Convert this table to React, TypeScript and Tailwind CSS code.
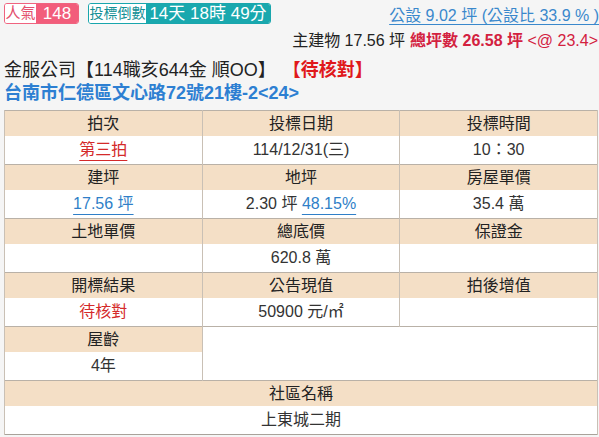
import React from 'react'

const font = { fontFamily: '"Liberation Sans", "Noto Sans CJK TC", sans-serif' }

const th = 'h-[25px] bg-[#f4dfc6] text-center text-[16px] text-[#222] font-normal border-x border-[#c9c0b5] p-0 leading-[25px]'
const td = 'h-[28px] bg-white text-center text-[16px] text-[#333] border-x border-[#c9c0b5] p-0 leading-[28px]'
const groupRow = 'border-t border-[#b9b1a7]'

const Link = ({ children, color = 'text-[#2f7fc8]' }: { children: React.ReactNode; color?: string }) => (
  <span className={`${color} underline underline-offset-[5px] decoration-1`}>{children}</span>
)

export default function App() {
  return (
    <div className="min-h-screen w-[599px] bg-[#f5f5f5] text-[#222]" style={font}>
      {/* top info */}
      <div className="flex items-start justify-between pl-1 pt-[3px]">
        <div className="flex items-center gap-[9px]">
          <div className="flex h-[21px] overflow-hidden rounded-[3px] border border-[#f0637f]">
            <span className="flex w-[31px] items-center justify-center bg-white text-[15px] text-[#e3506e]">人氣</span>
            <span className="flex w-[42px] items-center justify-center bg-[#f25d7b] text-[17px] text-white">148</span>
          </div>
          <div className="flex h-[21px] overflow-hidden rounded-[3px] border border-[#19a6ad]">
            <span className="flex w-[57px] items-center justify-center bg-white text-[14px] text-[#138f95]">投標倒數</span>
            <span className="flex w-[124px] items-center justify-center bg-[#19a8ae] text-[17px] text-white">14天 18時 49分</span>
          </div>
        </div>
        <span className="mt-[3px] text-[16px] leading-[20px] text-[#3a88cc] underline underline-offset-[3px] decoration-1">
          公設 9.02 坪 (公設比 33.9 % )
        </span>
      </div>
      <div className="mt-[5px] flex justify-end pr-[1px] text-[16px] leading-[20px]">
        <span>主建物 17.56 坪</span>
        <span className="ml-[5px] text-[#d3213f]">
          <b>總坪數 26.58 坪</b> &lt;@ 23.4&gt;
        </span>
      </div>
      <div className="mt-[8px] pl-1 text-[18px] leading-[23px]">
        金服公司【114職亥644金 順OO】
        <span className="ml-[16px] font-bold text-[#e0181b]">【待核對】</span>
      </div>
      <div className="pl-1 text-[18px] font-bold leading-[23px] text-[#2d7fd2]">
        台南市仁德區文心路72號21樓-2&lt;24&gt;
      </div>

      {/* auction table */}
      <table className="mt-[5px] ml-1 w-[594px] table-fixed border-collapse border border-[#a9a29a]">
        <tbody>
          <tr className={groupRow}>
            <th className={th}>拍次</th>
            <th className={th}>投標日期</th>
            <th className={th}>投標時間</th>
          </tr>
          <tr>
            <td className={td}><Link color="text-[#d42a2a]">第三拍</Link></td>
            <td className={td}>114/12/31(三)</td>
            <td className={td}>10：30</td>
          </tr>
          <tr className={groupRow}>
            <th className={th}>建坪</th>
            <th className={th}>地坪</th>
            <th className={th}>房屋單價</th>
          </tr>
          <tr>
            <td className={td}><Link>17.56 坪</Link></td>
            <td className={td}>2.30 坪 <Link>48.15%</Link></td>
            <td className={td}>35.4 萬</td>
          </tr>
          <tr className={groupRow}>
            <th className={th}>土地單價</th>
            <th className={th}>總底價</th>
            <th className={th}>保證金</th>
          </tr>
          <tr>
            <td className={td}></td>
            <td className={td}>620.8 萬</td>
            <td className={td}></td>
          </tr>
          <tr className={groupRow}>
            <th className={th}>開標結果</th>
            <th className={th}>公告現值</th>
            <th className={th}>拍後增值</th>
          </tr>
          <tr>
            <td className={td}><span className="text-[#d42a2a]">待核對</span></td>
            <td className={td}>50900 元/㎡</td>
            <td className={td}></td>
          </tr>
          <tr className={groupRow}>
            <th className={th}>屋齡</th>
            <td colSpan={2} rowSpan={2} className="bg-white border-x border-[#c9c0b5]"></td>
          </tr>
          <tr>
            <td className={td}>4年</td>
          </tr>
          <tr className={groupRow}>
            <th colSpan={3} className={th}>社區名稱</th>
          </tr>
          <tr>
            <td colSpan={3} className={td}>上東城二期</td>
          </tr>
        </tbody>
      </table>
    </div>
  )
}
